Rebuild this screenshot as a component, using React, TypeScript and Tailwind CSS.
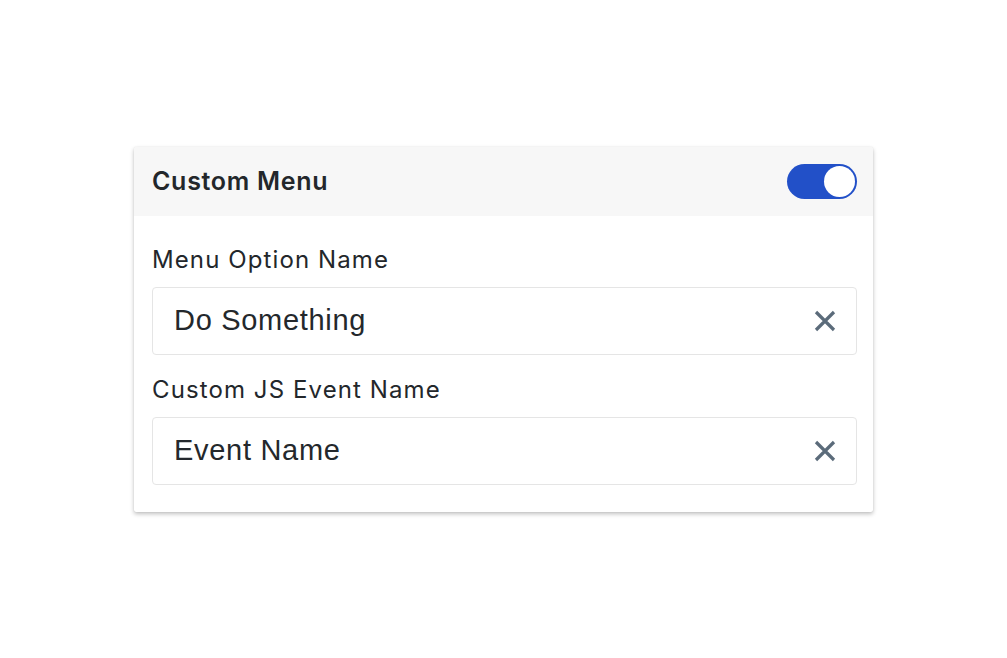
function ClearIcon() {
  return (
    <svg viewBox="0 0 24 24" className="h-[24px] w-[24px] text-[#5b6b7a]" fill="none" stroke="currentColor" strokeWidth={3.2} strokeLinecap="butt">
      <path d="M3 3L21 21M21 3L3 21" />
    </svg>
  )
}

function Field({ label, value }: { label: string; value: string }) {
  return (
    <div className="flex flex-col">
      <label className="text-[24px] leading-[28px] text-[#23272b] tracking-[1.1px]">{label}</label>
      <div className="mt-[13px] flex h-[68px] items-center justify-between rounded-[4px] border border-[#e5e5e5] bg-white pl-[21px] pr-[19px]">
        <span className="font-['Liberation_Sans',Arial,sans-serif] text-[29px] tracking-[0.7px] text-[#24282c]">{value}</span>
        <ClearIcon />
      </div>
    </div>
  )
}

export default function App() {
  return (
    <div className="flex h-[658px] w-[1007px] items-start justify-start bg-white font-['Inter',sans-serif]">
      <div className="ml-[134px] mt-[147px] w-[739px] overflow-hidden rounded-[2px] bg-white shadow-[0_2px_4px_rgba(0,0,0,0.25),0_0_1px_rgba(0,0,0,0.15)]">
        <div className="flex h-[69px] items-center justify-between bg-[#f7f7f7] pl-[18px] pr-[16px]">
          <h2 className="text-[25px] font-semibold tracking-[0.7px] text-[#23272b]">Custom Menu</h2>
          <div className="flex h-[35px] w-[70px] items-center justify-end rounded-full bg-[#2250c8] p-[2px]">
            <div className="h-[31px] w-[31px] rounded-full bg-white" />
          </div>
        </div>
        <div className="flex flex-col gap-[21px] pl-[18px] pr-[16px] pt-[30px] pb-[27px]">
          <Field label="Menu Option Name" value="Do Something" />
          <Field label="Custom JS Event Name" value="Event Name" />
        </div>
      </div>
    </div>
  )
}
